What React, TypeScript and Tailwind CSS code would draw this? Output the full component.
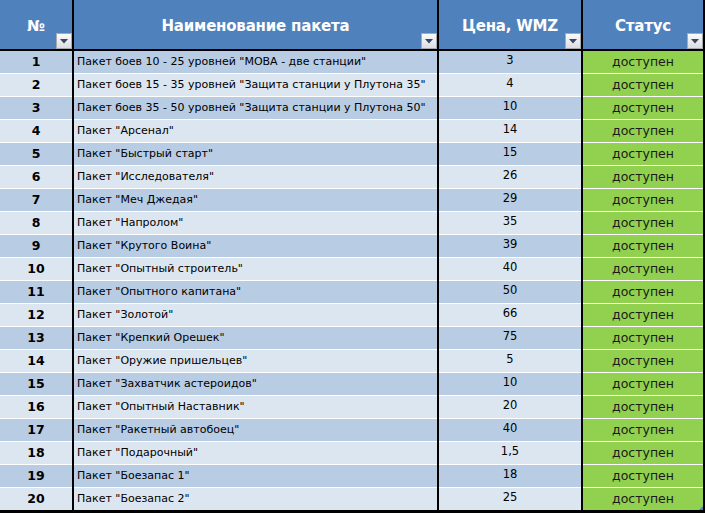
const rows: [string, string][] = [
  ['Пакет боев 10 - 25 уровней "МОВА - две станции"', '3'],
  ['Пакет боев 15 - 35 уровней "Защита станции у Плутона 35"', '4'],
  ['Пакет боев 35 - 50 уровней "Защита станции у Плутона 50"', '10'],
  ['Пакет "Арсенал"', '14'],
  ['Пакет "Быстрый старт"', '15'],
  ['Пакет "Исследователя"', '26'],
  ['Пакет "Меч Джедая"', '29'],
  ['Пакет "Напролом"', '35'],
  ['Пакет "Крутого Воина"', '39'],
  ['Пакет "Опытный строитель"', '40'],
  ['Пакет "Опытного капитана"', '50'],
  ['Пакет "Золотой"', '66'],
  ['Пакет "Крепкий Орешек"', '75'],
  ['Пакет "Оружие пришельцев"', '5'],
  ['Пакет "Захватчик астероидов"', '10'],
  ['Пакет "Опытный Наставник"', '20'],
  ['Пакет "Ракетный автобоец"', '40'],
  ['Пакет "Подарочный"', '1,5'],
  ['Пакет "Боезапас 1"', '18'],
  ['Пакет "Боезапас 2"', '25'],
];

function FilterButton() {
  return (
    <div className="absolute right-0 bottom-0 w-[16px] h-[16px] border border-[#a7abb0] bg-gradient-to-b from-[#fbfbfb] to-[#dadde2] flex items-center justify-center">
      <svg width="8" height="5" viewBox="0 0 8 5">
        <path d="M0 0 H8 L4 4.5 Z" fill="#3a4760" />
      </svg>
    </div>
  );
}

function HeaderCell({ label, width }: { label: string; width: string }) {
  return (
    <div className={`${width} relative bg-[#4f81bd] flex items-center justify-center pt-[3px]`}>
      <span className="text-white font-bold text-[15px] tracking-[-0.2px]">{label}</span>
      <FilterButton />
    </div>
  );
}

export default function App() {
  return (
    <div className="w-[705px] h-[513px] bg-black flex flex-col pb-[3px] relative font-['DejaVu_Sans',sans-serif] text-black">
      {/* шапка таблицы */}
      <div className="flex h-[49px] gap-[2px] pr-[2px] mb-[2px] shrink-0">
        <HeaderCell label="№" width="w-[72px]" />
        <HeaderCell label="Наименование пакета" width="w-[363px]" />
        <HeaderCell label="Цена, WMZ" width="w-[142px]" />
        <HeaderCell label="Статус" width="w-[120px]" />
      </div>

      {rows.map(([name, price], i) => {
        const last = i === rows.length - 1;
        const band = i % 2 === 0 ? 'bg-[#b8cce4]' : 'bg-[#dce6f1]';
        const sep = last ? 'h-[22px]' : 'h-[23px] border-b border-white';
        return (
          <div key={i} className="flex gap-[2px] pr-[2px] shrink-0">
            <div className={`w-[72px] ${sep} ${band} flex items-center justify-center font-bold text-[12.5px]`}>
              {i + 1}
            </div>
            <div className={`w-[363px] ${sep} ${band} flex items-center pl-[3px] text-[11px] whitespace-nowrap overflow-hidden`}>
              {name}
            </div>
            <div className={`w-[142px] ${sep} ${band} flex items-center justify-center pb-[2px] text-[11.5px]`}>
              {price}
            </div>
            <div className={`w-[120px] ${sep} ${last ? '' : 'border-[#eef7e0]'} bg-[#92d050] flex items-center justify-center text-[12.5px] text-[#1a1a1a]`}>
              доступен
            </div>
          </div>
        );
      })}

      {/* маркер изменения размера таблицы */}
      <svg className="absolute right-[2px] bottom-[3px]" width="4" height="4" viewBox="0 0 4 4">
        <path d="M4 0 V4 H0 Z" fill="#4f81bd" />
      </svg>
    </div>
  );
}
